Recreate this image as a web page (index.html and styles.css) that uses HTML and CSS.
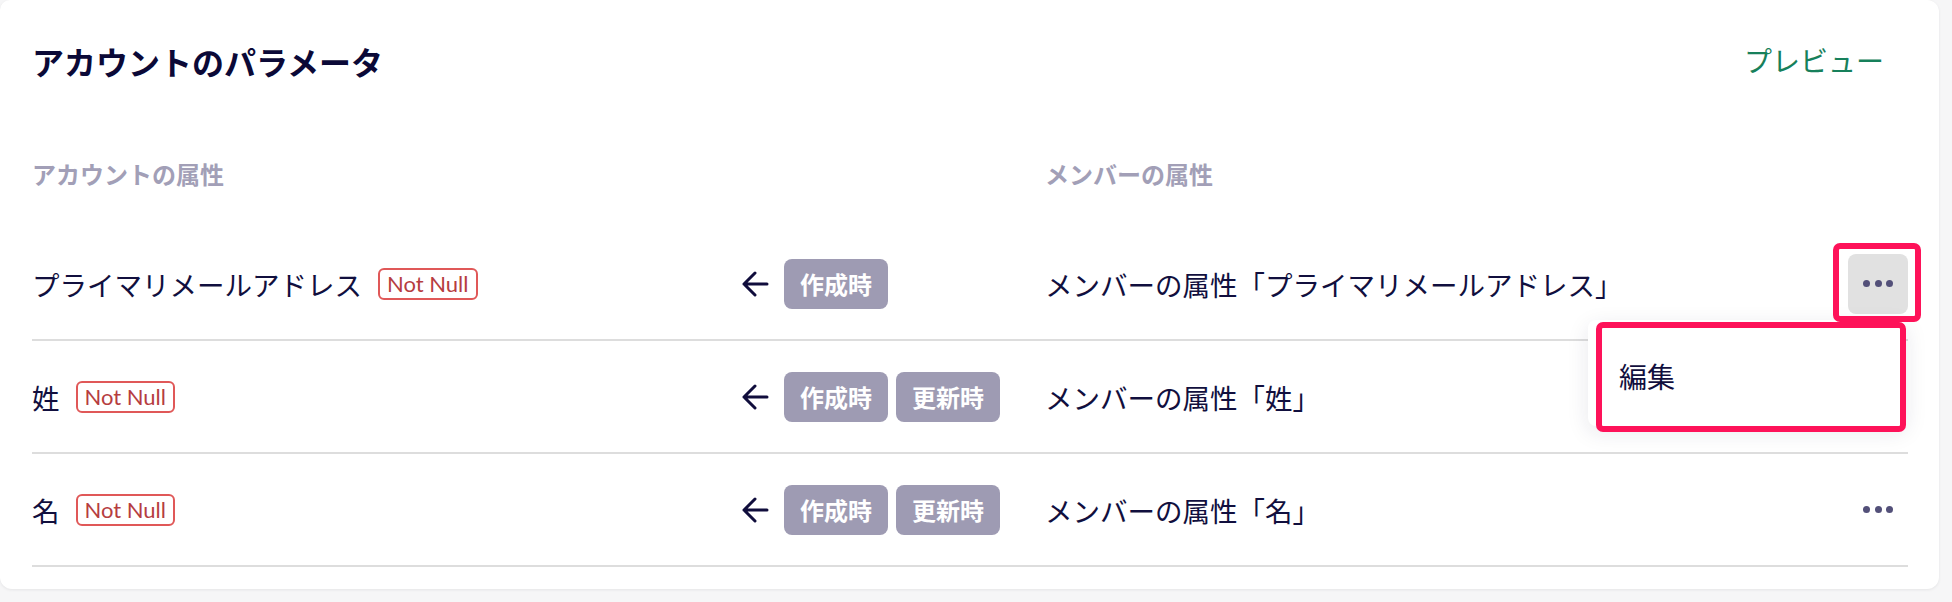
FILE: index.html
```html
<!DOCTYPE html>
<html lang="ja">
<head>
<meta charset="utf-8">
<title>アカウントのパラメータ</title>
<link rel="stylesheet" href="styles.css">
</head>
<body>
<div class="card">
  <div class="card-header">
    <h1 class="title">アカウントのパラメータ</h1>
    <button class="preview">プレビュー</button>
  </div>
  <div class="grid col-head">
    <div>アカウントの属性</div>
    <div></div>
    <div>メンバーの属性</div>
    <div></div>
  </div>

  <div class="grid row">
    <div class="cell name">プライマリメールアドレス<span class="notnull">Not Null</span></div>
    <div class="cell sync">
      <svg class="arrow" viewBox="0 0 28 28" width="28" height="28"><path d="M26 14H3M14 3L3 14l11 11" fill="none" stroke="currentColor" stroke-width="3" stroke-linecap="round" stroke-linejoin="round"/></svg>
      <span class="tag">作成時</span>
    </div>
    <div class="cell member">メンバーの属性「プライマリメールアドレス」</div>
    <div class="cell actions">
      <button class="more active"><span class="dot"></span><span class="dot"></span><span class="dot"></span></button>
      <span class="mark mark-btn"></span>
      <div class="menu"><div class="menu-item">編集</div></div>
      <span class="mark mark-menu"></span>
    </div>
  </div>

  <div class="grid row">
    <div class="cell name">姓<span class="notnull">Not Null</span></div>
    <div class="cell sync">
      <svg class="arrow" viewBox="0 0 28 28" width="28" height="28"><path d="M26 14H3M14 3L3 14l11 11" fill="none" stroke="currentColor" stroke-width="3" stroke-linecap="round" stroke-linejoin="round"/></svg>
      <span class="tag">作成時</span><span class="tag">更新時</span>
    </div>
    <div class="cell member">メンバーの属性「姓」</div>
    <div class="cell actions"></div>
  </div>

  <div class="grid row">
    <div class="cell name">名<span class="notnull">Not Null</span></div>
    <div class="cell sync">
      <svg class="arrow" viewBox="0 0 28 28" width="28" height="28"><path d="M26 14H3M14 3L3 14l11 11" fill="none" stroke="currentColor" stroke-width="3" stroke-linecap="round" stroke-linejoin="round"/></svg>
      <span class="tag">作成時</span><span class="tag">更新時</span>
    </div>
    <div class="cell member">メンバーの属性「名」</div>
    <div class="cell actions">
      <button class="more"><span class="dot"></span><span class="dot"></span><span class="dot"></span></button>
    </div>
  </div>
</div>
</body>
</html>
```

FILE: styles.css
```css
* { box-sizing: border-box; }
html, body { margin: 0; padding: 0; }
body {
  background: #f6f6f7;
  font-family: Lato, "Noto Sans CJK JP", sans-serif;
  color: #110f3e;
  width: 1952px;
  height: 602px;
  overflow: hidden;
}
.card {
  width: 1939px;
  background: #ffffff;
  border-radius: 10px 12px 12px 12px;
  box-shadow: 0 1px 3px rgba(20, 20, 40, 0.08);
  padding: 32px 31px 22px 32px;
}
.card-header {
  display: flex;
  align-items: center;
  justify-content: space-between;
  height: 58px;
}
.title {
  margin: 0;
  font-family: "Noto Sans CJK JP", sans-serif;
  font-size: 32px;
  font-weight: 700;
  color: #0b0937;
  line-height: 40px;
}
.preview {
  border: none;
  background: none;
  font-family: "Noto Sans CJK JP", sans-serif;
  font-size: 28px;
  color: #17805b;
  padding: 0 24px 0 0;
  line-height: 40px;
  margin-top: -3px;
}
.grid {
  display: grid;
  grid-template-columns: 710px 303px 1fr 60px;
}
.col-head {
  margin: 66px 0 36px;
  height: 36px;
  line-height: 36px;
  font-family: "Noto Sans CJK JP", sans-serif;
  font-size: 24px;
  font-weight: 700;
  color: #a29fb7;
}
.row {
  height: 113px;
  border-bottom: 2px solid #dddddd;
  align-items: center;
}
.cell {
  display: flex;
  align-items: center;
  font-family: "Noto Sans CJK JP", sans-serif;
  font-size: 27.5px;
  color: #110f3e;
}
.notnull {
  margin-left: 16px;
  height: 32px;
  padding: 0 7px;
  border: 2px solid #e05858;
  border-radius: 6px;
  font-family: Lato, sans-serif;
  font-size: 22px;
  line-height: 28px;
  color: #b63d3f;
}
.sync { gap: 8px; }
.arrow {
  color: #100d3c;
  margin-right: 7px;
  margin-left: -1px;
}
.tag {
  height: 50px;
  padding: 0 16px;
  border-radius: 8px;
  background: #9e9bb3;
  color: #ffffff;
  font-size: 24px;
  font-weight: 700;
  line-height: 50px;
}
.actions {
  position: relative;
  justify-content: flex-end;
  height: 60px;
}
.more {
  width: 60px;
  height: 60px;
  border: none;
  border-radius: 8px;
  background: transparent;
  display: flex;
  align-items: center;
  justify-content: center;
  gap: 4.5px;
  padding: 0;
}
.more.active { background: #e1e1e1; }
.dot {
  width: 7px;
  height: 7px;
  border-radius: 50%;
  background: #535079;
}
.menu {
  position: absolute;
  left: -260px;
  top: 66px;
  width: 318px;
  height: 106px;
  background: #ffffff;
  border-radius: 8px;
  box-shadow: 0 6px 22px rgba(30, 30, 70, 0.10);
  z-index: 2;
  display: flex;
  align-items: center;
}
.menu-item {
  padding-left: 31px;
  font-family: "Noto Sans CJK JP", sans-serif;
  font-size: 28px;
  color: #110f3e;
  margin-top: 6px;
}
.mark {
  position: absolute;
  border: 6px solid #fe1259;
  border-radius: 7px;
  z-index: 3;
  pointer-events: none;
}
.mark-btn {
  left: -15px;
  top: -11px;
  width: 88px;
  height: 79px;
}
.mark-menu {
  left: -252px;
  top: 68px;
  width: 310px;
  height: 110px;
}
```
